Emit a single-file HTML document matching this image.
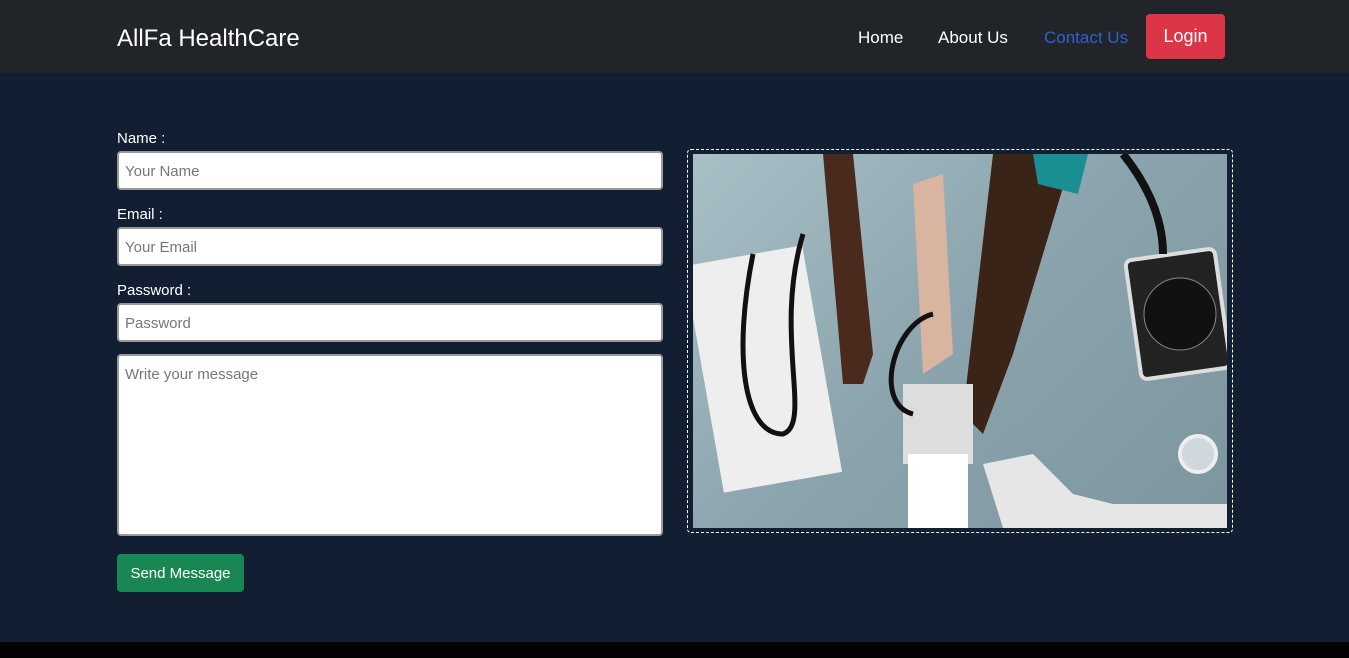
<!DOCTYPE html>
<html><head><meta charset="utf-8"><style>
*{box-sizing:border-box;margin:0;padding:0}
body{width:1349px;height:658px;overflow:hidden;background:#121f33;font-family:"Liberation Sans",sans-serif;position:relative}
.nav{position:absolute;left:0;top:0;width:1349px;height:73px;background:#212529}
.brand{position:absolute;left:117px;top:25px;color:#fff;font-size:24px}
.nav a{position:absolute;top:28px;font-size:17px;color:#fff;text-decoration:none}
.login{position:absolute;left:1146px;top:14px;width:79px;height:45px;background:#dc3545;border-radius:4px;color:#fff;font-size:18px;text-align:center;line-height:45px}
label{position:absolute;left:117px;color:#fff;font-size:15px}
.in{position:absolute;left:117px;width:546px;height:39px;background:#fff;border:2px solid #9a9a9a;border-radius:4px;color:#777;font-size:15px;padding:10px 6px}
.btn{position:absolute;left:117px;top:554px;width:127px;height:38px;background:#198754;border-radius:4px;color:#fff;font-size:15px;text-align:center;line-height:40px}
.img{position:absolute;left:687px;top:149px;width:546px;height:384px;border:1px dashed #fff;border-radius:4px}
.pic{position:absolute;left:5px;top:4px;width:534px;height:374px;background:linear-gradient(135deg,#a9bfc6,#8aa3ac 50%,#7d959e);overflow:hidden}
.foot{position:absolute;left:0;top:642px;width:1349px;height:16px;background:#030303}
</style></head><body>
<div class="nav">
<div class="brand">AllFa HealthCare</div>
<a style="left:858px">Home</a>
<a style="left:938px">About Us</a>
<a style="left:1044px;color:#2f5fd0">Contact Us</a>
<div class="login">Login</div>
</div>
<label style="top:130px">Name :</label>
<div class="in" style="top:151px">Your Name</div>
<label style="top:206px">Email :</label>
<div class="in" style="top:227px">Your Email</div>
<label style="top:282px">Password :</label>
<div class="in" style="top:303px">Password</div>
<div class="in" style="top:354px;height:182px;padding-top:10px">Write your message</div>
<div class="btn">Send Message</div>
<div class="img"><div class="pic">
<svg width="534" height="374" viewBox="0 0 534 374">
<rect x="10" y="100" width="120" height="230" fill="#eee" transform="rotate(-10 70 215)"/>
<path d="M130 0 L160 0 L180 200 L170 230 L150 230 Z" fill="#4a2a1c"/>
<path d="M300 0 L380 0 L320 200 L290 280 L270 260 Z" fill="#3a2418"/>
<path d="M340 0 L395 0 L385 40 L345 30Z" fill="#1a8f93"/>
<path d="M220 30 L250 20 L260 200 L230 220 Z" fill="#d9b4a0"/>
<rect x="210" y="230" width="70" height="80" fill="#ddd"/>
<rect x="215" y="300" width="60" height="74" fill="#fff"/>
<path d="M290 310 L340 300 L380 340 L420 350 L534 350 L534 374 L310 374Z" fill="#e6e6e6"/>
<rect x="440" y="100" width="90" height="120" rx="6" fill="#222" stroke="#ddd" stroke-width="4" transform="rotate(-8 485 160)"/>
<circle cx="487" cy="160" r="36" fill="#111" stroke="#888"/>
<path d="M430 0 C470 50 470 90 470 100" stroke="#111" stroke-width="8" fill="none"/>
<path d="M60 100 C40 200 50 280 90 280 C120 270 80 180 110 80" stroke="#111" stroke-width="5" fill="none"/>
<path d="M240 160 C200 170 180 250 220 260" stroke="#111" stroke-width="5" fill="none"/>
<circle cx="505" cy="300" r="18" fill="#cfd8dc" stroke="#eee" stroke-width="4"/>
</svg></div></div>
<div class="foot"></div>
</body></html>
